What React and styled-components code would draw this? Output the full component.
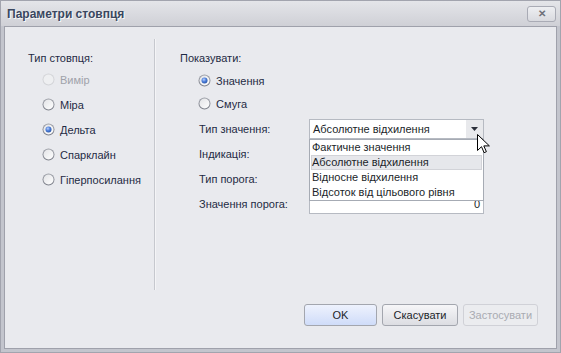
import styled, { createGlobalStyle, css } from 'styled-components'

const GlobalStyle = createGlobalStyle`
  body {
    margin: 0;
    font-family: "Liberation Sans", Arial, sans-serif;
    font-size: 11px;
    color: #1f2a44;
  }
`

const typeOptions = [
  { label: 'Вимір', disabled: true },
  { label: 'Міра' },
  { label: 'Дельта', checked: true },
  { label: 'Спарклайн' },
  { label: 'Гіперпосилання' },
]

const valueTypes = [
  'Фактичне значення',
  'Абсолютне відхилення',
  'Відносне відхилення',
  'Відсоток від цільового рівня',
]

function Radio({ checked, disabled }) {
  return (
    <svg width="13" height="13" viewBox="0 0 13 13">
      <defs>
        <linearGradient id="ring" x1="0" y1="0" x2="0" y2="1">
          <stop offset="0" stopColor="#9ea1a9" />
          <stop offset="1" stopColor="#7d808a" />
        </linearGradient>
        <linearGradient id="face" x1="0" y1="0" x2="1" y2="1">
          <stop offset="0" stopColor="#e2e3e6" />
          <stop offset="1" stopColor="#ffffff" />
        </linearGradient>
        <radialGradient id="dot" cx="0.4" cy="0.35" r="0.7">
          <stop offset="0" stopColor="#b9d0ff" />
          <stop offset="0.5" stopColor="#4d7fd9" />
          <stop offset="1" stopColor="#2a55a8" />
        </radialGradient>
      </defs>
      <circle cx="6.5" cy="6.5" r="6" fill={disabled ? '#d3d4d8' : 'url(#ring)'} />
      <circle cx="6.5" cy="6.5" r="5" fill={disabled ? '#eeeff1' : 'url(#face)'} />
      {checked && <circle cx="6.5" cy="6.5" r="3" fill="url(#dot)" />}
    </svg>
  )
}

function App() {
  return (
    <>
      <GlobalStyle />
      <Frame>
        <TitleBar>
          <Title>Параметри стовпця</Title>
          <CloseButton>✕</CloseButton>
        </TitleBar>
        <Content>
          <Columns>
            <LeftColumn>
              <Heading>Тип стовпця:</Heading>
              <RadioList>
                {typeOptions.map((o) => (
                  <RadioItem key={o.label} $disabled={o.disabled} $height={25}>
                    <Radio checked={o.checked} disabled={o.disabled} />
                    {o.label}
                  </RadioItem>
                ))}
              </RadioList>
            </LeftColumn>
            <RightColumn>
              <Heading>Показувати:</Heading>
              <RadioList $indent={18} $top={3}>
                <RadioItem $height={23}>
                  <Radio checked />
                  Значення
                </RadioItem>
                <RadioItem $height={23}>
                  <Radio />
                  Смуга
                </RadioItem>
              </RadioList>
              <Form>
                <FieldLabel>Тип значення:</FieldLabel>
                <Combo>
                  <ComboText>Абсолютне відхилення</ComboText>
                  <ArrowButton>
                    <svg width="7" height="4" viewBox="0 0 7 4">
                      <path d="M0 0h7L3.5 4z" fill="#2b2f3a" />
                    </svg>
                  </ArrowButton>
                  <DropList>
                    {valueTypes.map((t) => (
                      <DropItem key={t} $active={t === 'Абсолютне відхилення'}>{t}</DropItem>
                    ))}
                  </DropList>
                  <Cursor width="13" height="20" viewBox="0 0 13 20">
                    <path
                      d="M0.5 0.5v16l4-3.8 2.6 6 2.3-1-2.6-5.8h5.6z"
                      fill="#fff"
                      stroke="#000"
                      strokeWidth="1"
                    />
                  </Cursor>
                </Combo>
                <FieldLabel>Індикація:</FieldLabel>
                <Combo />
                <FieldLabel>Тип порога:</FieldLabel>
                <Combo />
                <FieldLabel>Значення порога:</FieldLabel>
                <NumberInput>0</NumberInput>
              </Form>
            </RightColumn>
          </Columns>
          <ButtonRow>
            <Button $primary $width={73}>OK</Button>
            <Button $width={76}>Скасувати</Button>
            <Button disabled $width={75}>Застосувати</Button>
          </ButtonRow>
        </Content>
      </Frame>
    </>
  )
}

const Frame = styled.div`
  width: 561px;
  height: 353px;
  box-sizing: border-box;
  border: 1px solid #a2a4ae;
  background: #c3c5cd;
  display: flex;
  flex-direction: column;
`

const TitleBar = styled.div`
  height: 25px;
  flex: none;
  display: flex;
  align-items: center;
  justify-content: space-between;
  padding: 0 4px 0 6px;
  background: linear-gradient(#e4e5e9, #cfd0d6);
`

const Title = styled.div`
  font-weight: bold;
  font-size: 12px;
  color: #3a475f;
  text-shadow: 1px 1px 0 rgba(255, 255, 255, 0.85);
`

const CloseButton = styled.div`
  width: 27px;
  height: 14px;
  border: 1px solid #a9abb5;
  border-radius: 3px;
  background: linear-gradient(#eeeff2, #d9dadf);
  color: #6e707a;
  font-size: 10px;
  font-weight: bold;
  line-height: 14px;
  text-align: center;
  margin-top: 1px;
`

const Content = styled.div`
  flex: 1;
  margin: 0 3px 3px;
  border: 1px solid #9fa1ab;
  background: #e9eaee;
  display: flex;
  flex-direction: column;
`

const Columns = styled.div`
  display: flex;
  margin-top: 12px;
  height: 251px;
`

const LeftColumn = styled.div`
  width: 126px;
  padding: 11px 0 0 23px;
  border-right: 1px solid #c6c8ce;
  box-shadow: 1px 0 0 #f4f4f6;
`

const RightColumn = styled.div`
  flex: 1;
  padding: 11px 0 0 25px;
`

const Heading = styled.div`
  line-height: 16px;
`

const RadioList = styled.div`
  display: flex;
  flex-direction: column;
  margin: ${(p) => p.$top || 1}px 0 0 ${(p) => p.$indent || 14}px;
`

const RadioItem = styled.div`
  display: flex;
  align-items: center;
  gap: 5px;
  height: ${(p) => p.$height}px;
  color: ${(p) => (p.$disabled ? '#a0a2aa' : '#1f2a44')};
`

const Form = styled.div`
  display: grid;
  grid-template-columns: 110px 175px;
  grid-auto-rows: 20px;
  row-gap: 5px;
  align-items: center;
  margin: 4px 0 0 19px;
`

const FieldLabel = styled.div`
  line-height: 20px;
`

const fieldBox = css`
  box-sizing: border-box;
  height: 20px;
  border: 1px solid #b6bac2;
  background: #fff;
`

const Combo = styled.div`
  ${fieldBox};
  position: relative;
  display: flex;
  align-items: center;
`

const ComboText = styled.div`
  flex: 1;
  padding-left: 3px;
  color: #1b1f2a;
`

const ArrowButton = styled.div`
  width: 17px;
  height: 18px;
  background: #e8e9ec;
  display: flex;
  align-items: center;
  justify-content: center;
`

const DropList = styled.div`
  position: absolute;
  top: 19px;
  left: -1px;
  width: 175px;
  box-sizing: border-box;
  border: 1px solid #a6abb4;
  background: #fff;
  z-index: 2;
`

const DropItem = styled.div`
  height: 15px;
  line-height: 15px;
  padding-left: 2px;
  color: #1b1f2a;
  ${(p) =>
    p.$active &&
    css`
      margin: 0 1px;
      padding-left: 1px;
      background: #e6e7eb;
      box-shadow: inset 0 0 0 1px #d2d3d8;
    `}
`

const Cursor = styled.svg`
  position: absolute;
  left: 167px;
  top: 14px;
  z-index: 3;
`

const NumberInput = styled.div`
  ${fieldBox};
  text-align: right;
  padding-right: 3px;
  line-height: 18px;
  color: #1b1f2a;
`

const ButtonRow = styled.div`
  margin-top: auto;
  display: flex;
  justify-content: flex-end;
  gap: 5px;
  padding: 0 18px 22px 0;
`

const Button = styled.button`
  box-sizing: border-box;
  height: 22px;
  width: ${(p) => p.$width}px;
  padding: 0;
  font: inherit;
  font-size: 11px;
  border-radius: 3px;
  border: 1px solid #a3a6ae;
  color: #1b1f2a;
  background: ${(p) =>
    p.$primary
      ? 'linear-gradient(#eef2fd, #cfdcf9)'
      : 'linear-gradient(#f6f6f8, #dcdde2)'};

  &:disabled {
    border-color: #d0d1d7;
    background: #ebecef;
    color: #a9abb2;
  }
`

export default App
